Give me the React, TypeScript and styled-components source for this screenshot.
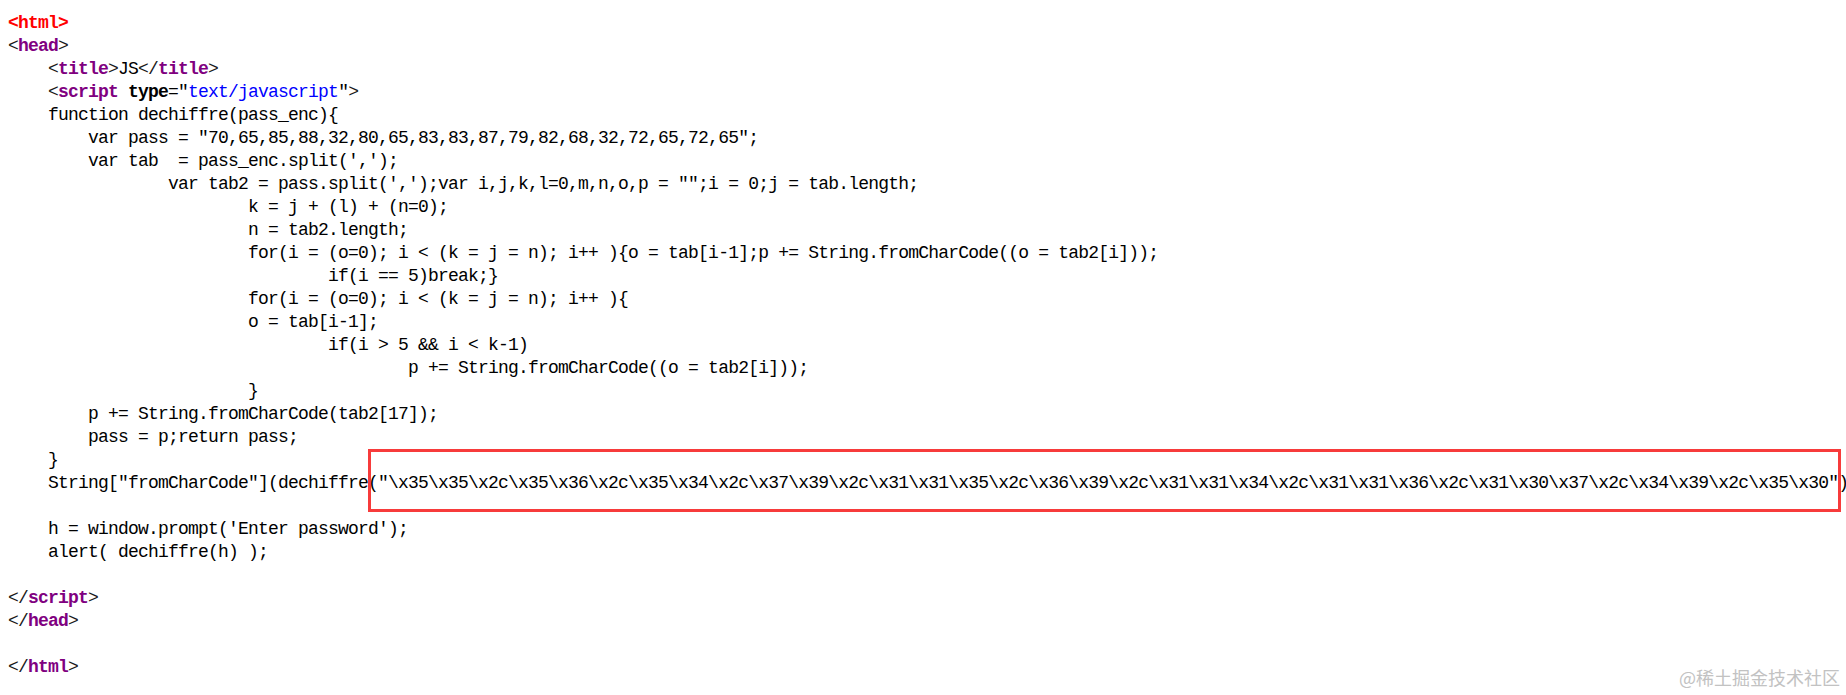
import React from 'react';
import styled, { createGlobalStyle } from 'styled-components';

const Global = createGlobalStyle`
  html, body { margin: 0; padding: 0; background: #ffffff; }
  body { width: 1846px; height: 695px; overflow: hidden; }
`;

const Page = styled.div`
  position: relative;
  width: 1846px;
  height: 695px;
  overflow: hidden;
  background: #ffffff;
  box-sizing: border-box;
  padding: 11.5px 0 0 8px;
`;

const Code = styled.div`
  font-family: "Liberation Mono", "Courier New", monospace;
  font-size: 18px;
  letter-spacing: -0.8px;
  line-height: 23px;
  color: #000000;
`;

const Line = styled.div`
  height: 23px;
  white-space: pre;
`;

type Kind = 'txt' | 'br' | 'tag' | 'root' | 'attr' | 'str';

const Tok = styled.span<{ $k: Kind }>`
  color: ${({ $k }) =>
    $k === 'root' ? '#ff0000' : $k === 'tag' ? '#800080' : $k === 'str' ? '#0000ff' : $k === 'br' ? '#1a1a1a' : '#000000'};
  font-weight: ${({ $k }) => ($k === 'root' || $k === 'tag' || $k === 'attr' ? 700 : 400)};
`;

const Highlight = styled.div`
  position: absolute;
  left: 368px;
  top: 449px;
  width: 1473px;
  height: 63px;
  box-sizing: border-box;
  border: 3px solid #f73b3b;
  pointer-events: none;
`;

const Watermark = styled.div`
  position: absolute;
  right: 6px;
  bottom: 7px;
  font-family: "Noto Sans CJK SC", "Noto Sans", sans-serif;
  font-size: 18px;
  line-height: 22px;
  color: #c2c2c2;
`;

type Seg = [Kind, string];

const sp = (n: number) => ' '.repeat(n);

const hex =
  '\\x35\\x35\\x2c\\x35\\x36\\x2c\\x35\\x34\\x2c\\x37\\x39\\x2c\\x31\\x31\\x35\\x2c\\x36\\x39\\x2c\\x31\\x31\\x34\\x2c\\x31\\x31\\x36\\x2c\\x31\\x30\\x37\\x2c\\x34\\x39\\x2c\\x35\\x30';

const lines: Seg[][] = [
  [['root', '<html>']],
  [['br', '<'], ['tag', 'head'], ['br', '>']],
  [['txt', sp(4)], ['br', '<'], ['tag', 'title'], ['br', '>'], ['txt', 'JS'], ['br', '</'], ['tag', 'title'], ['br', '>']],
  [
    ['txt', sp(4)],
    ['br', '<'],
    ['tag', 'script'],
    ['txt', ' '],
    ['attr', 'type'],
    ['txt', '="'],
    ['str', 'text/javascript'],
    ['txt', '"'],
    ['br', '>'],
  ],
  [['txt', sp(4) + 'function dechiffre(pass_enc){']],
  [['txt', sp(8) + 'var pass = "70,65,85,88,32,80,65,83,83,87,79,82,68,32,72,65,72,65";']],
  [['txt', sp(8) + "var tab  = pass_enc.split(',');"]],
  [['txt', sp(16) + "var tab2 = pass.split(',');var i,j,k,l=0,m,n,o,p = \"\";i = 0;j = tab.length;"]],
  [['txt', sp(24) + 'k = j + (l) + (n=0);']],
  [['txt', sp(24) + 'n = tab2.length;']],
  [['txt', sp(24) + 'for(i = (o=0); i < (k = j = n); i++ ){o = tab[i-1];p += String.fromCharCode((o = tab2[i]));']],
  [['txt', sp(32) + 'if(i == 5)break;}']],
  [['txt', sp(24) + 'for(i = (o=0); i < (k = j = n); i++ ){']],
  [['txt', sp(24) + 'o = tab[i-1];']],
  [['txt', sp(32) + 'if(i > 5 && i < k-1)']],
  [['txt', sp(40) + 'p += String.fromCharCode((o = tab2[i]));']],
  [['txt', sp(24) + '}']],
  [['txt', sp(8) + 'p += String.fromCharCode(tab2[17]);']],
  [['txt', sp(8) + 'pass = p;return pass;']],
  [['txt', sp(4) + '}']],
  [['txt', sp(4) + 'String["fromCharCode"](dechiffre("' + hex + '")']],
  [],
  [['txt', sp(4) + "h = window.prompt('Enter password');"]],
  [['txt', sp(4) + 'alert( dechiffre(h) );']],
  [],
  [['br', '</'], ['tag', 'script'], ['br', '>']],
  [['br', '</'], ['tag', 'head'], ['br', '>']],
  [],
  [['br', '</'], ['tag', 'html'], ['br', '>']],
];

export default function App() {
  return (
    <>
      <Global />
      <Page>
        <Code>
          {lines.map((segs, i) => (
            <Line key={i}>
              {segs.map(([k, t], j) => (
                <Tok key={j} $k={k}>
                  {t}
                </Tok>
              ))}
            </Line>
          ))}
        </Code>
        <Highlight />
        <Watermark>@稀土掘金技术社区</Watermark>
      </Page>
    </>
  );
}
